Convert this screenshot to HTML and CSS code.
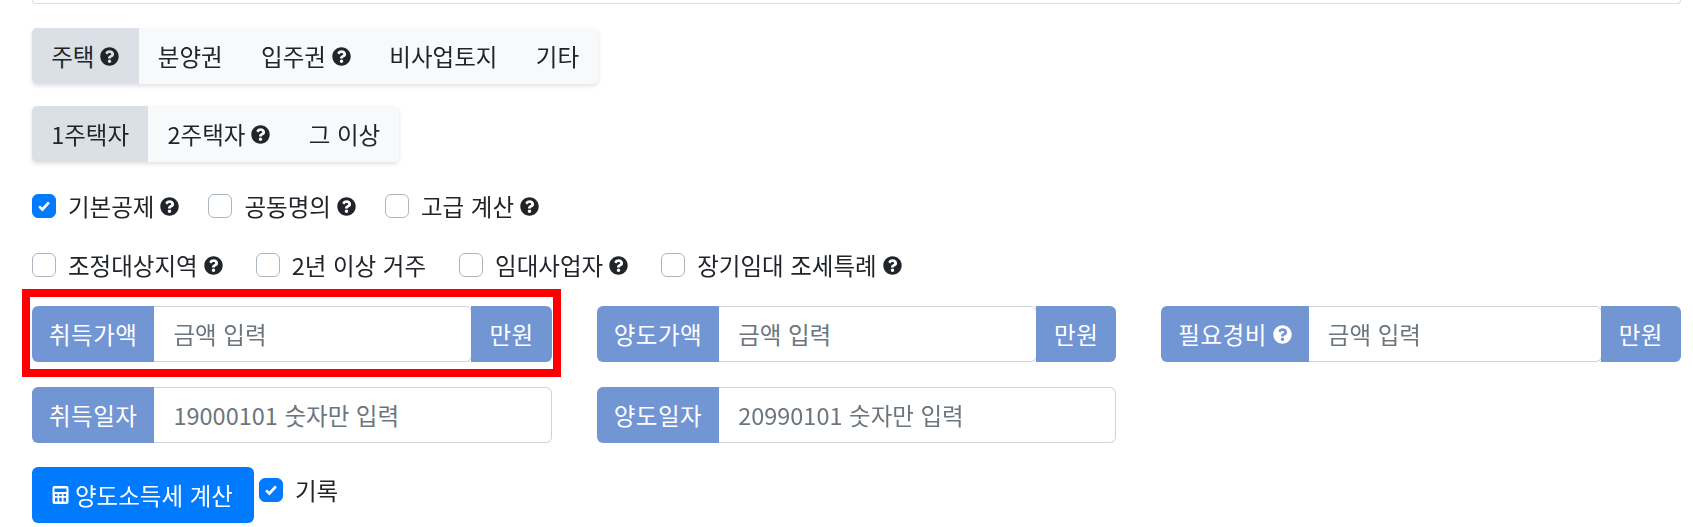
FILE: index.html
```html
<!DOCTYPE html>
<html lang="ko">
<head>
  <meta charset="UTF-8" />
  <title>양도소득세 계산</title>
  <link rel="stylesheet" href="styles.css">
</head>
<body>
  <svg class="defs" width="0" height="0">
    <symbol id="q" viewBox="0 0 512 512">
      <path d="M504 256c0 136.997-111.043 248-248 248S8 392.997 8 256C8 119.083 119.043 8 256 8s248 111.083 248 248zM262.655 90c-54.497 0-89.255 22.957-116.549 63.758-3.536 5.286-2.353 12.415 2.715 16.258l34.699 26.31c5.205 3.947 12.621 3.008 16.665-2.122 17.864-22.658 30.113-35.797 57.303-35.797 20.429 0 45.698 13.148 45.698 32.958 0 14.976-12.363 22.667-32.534 33.976C247.128 238.528 216 254.941 216 296v4c0 6.627 5.373 12 12 12h56c6.627 0 12-5.373 12-12v-1.333c0-28.462 83.186-29.647 83.186-106.667 0-58.002-60.165-102-116.531-102zM256 338c-25.365 0-46 20.635-46 46 0 25.364 20.635 46 46 46s46-20.636 46-46c0-25.365-20.635-46-46-46z"/>
    </symbol>
    <symbol id="tick" viewBox="0 0 8 8">
      <path d="M1.2 4.2 3.1 6 6.8 1.9" fill="none" stroke="#fff" stroke-width="1.5"/>
    </symbol>
  </svg>

  <div class="top-box"></div>

  <div class="tabs tabs-first">
    <a class="tab active">주택 <svg class="qm"><use href="#q"/></svg></a>
    <a class="tab">분양권</a>
    <a class="tab">입주권 <svg class="qm"><use href="#q"/></svg></a>
    <a class="tab">비사업토지</a>
    <a class="tab">기타</a>
  </div>

  <div class="tabs tabs-second">
    <a class="tab active">1주택자</a>
    <a class="tab">2주택자 <svg class="qm"><use href="#q"/></svg></a>
    <a class="tab">그 이상</a>
  </div>

  <div class="checks checks-first">
    <label class="check"><span class="box on"><svg><use href="#tick"/></svg></span>기본공제 <svg class="qm"><use href="#q"/></svg></label>
    <label class="check"><span class="box"></span>공동명의 <svg class="qm"><use href="#q"/></svg></label>
    <label class="check"><span class="box"></span>고급 계산 <svg class="qm"><use href="#q"/></svg></label>
  </div>

  <div class="checks checks-second">
    <label class="check"><span class="box"></span>조정대상지역 <svg class="qm"><use href="#q"/></svg></label>
    <label class="check"><span class="box"></span>2년 이상 거주</label>
    <label class="check"><span class="box"></span>임대사업자 <svg class="qm"><use href="#q"/></svg></label>
    <label class="check"><span class="box"></span>장기임대 조세특례 <svg class="qm"><use href="#q"/></svg></label>
  </div>

  <div class="fields">
    <div class="group marked">
      <span class="addon">취득가액</span>
      <input class="field" placeholder="금액 입력">
      <span class="addon unit">만원</span>
    </div>
    <div class="group">
      <span class="addon">양도가액</span>
      <input class="field" placeholder="금액 입력">
      <span class="addon unit">만원</span>
    </div>
    <div class="group">
      <span class="addon">필요경비 <svg class="qm"><use href="#q"/></svg></span>
      <input class="field" placeholder="금액 입력">
      <span class="addon unit">만원</span>
    </div>
    <div class="group">
      <span class="addon">취득일자</span>
      <input class="field" placeholder="19000101 숫자만 입력">
    </div>
    <div class="group">
      <span class="addon">양도일자</span>
      <input class="field" placeholder="20990101 숫자만 입력">
    </div>
  </div>

  <div class="actions">
    <button class="calc">
      <svg class="calc-icon" viewBox="0 0 16 18">
        <path fill="#fff" fill-rule="evenodd" d="M2 0h12a2 2 0 0 1 2 2v14a2 2 0 0 1-2 2H2a2 2 0 0 1-2-2V2a2 2 0 0 1 2-2zm0 2.500v3.500h12V2.500zM2.500 8v2h2.500V8zm4.200 0v2h2.600V8zm4.300 0v2h2.500V8zM2.500 11.800v3.700h2.500v-3.700zm4.200 0v3.700h2.600v-3.700zm4.300 0v3.700h2.500v-3.700z"/>
      </svg>양도소득세 계산
    </button>
    <label class="check record"><span class="box on"><svg><use href="#tick"/></svg></span>기록</label>
  </div>
</body>
</html>
```

FILE: styles.css
```css
* { box-sizing: border-box; }

body {
  margin: 0;
  padding: 0 12px 0 32px;
  background: #fff;
  color: #212529;
  font-family: "Noto Sans CJK KR", "Noto Sans", sans-serif;
  font-size: 23.5px;
  line-height: 1.4;
  overflow: hidden;
  filter: blur(0.4px);
}

.defs { position: absolute; }

.top-box {
  height: 4px;
  border: 1px solid #dcdfe3;
  border-top: none;
  border-radius: 0 0 6px 6px;
}

.qm {
  width: 19px;
  height: 19px;
  fill: #212529;
  vertical-align: -3px;
}

/* tabs */
.tabs {
  display: flex;
  width: fit-content;
  height: 56px;
  background: #f8f9fa;
  border-radius: 5px;
  box-shadow: 0 2px 4px rgba(0, 0, 0, 0.12);
}
.tabs-first { margin-top: 24px; }
.tabs-second { margin-top: 22px; }

.tab {
  display: flex;
  align-items: center;
  gap: 6px;
  padding: 0 19.2px;
  white-space: nowrap;
}
.tab.active {
  background: #dae0e5;
  border-radius: 5px 0 0 5px;
}

/* checkboxes */
.checks {
  display: flex;
  height: 30px;
  align-items: center;
}
.checks-first { margin-top: 29px; gap: 29px; }
.checks-second { margin-top: 29px; gap: 33px; }

.check {
  display: flex;
  align-items: center;
  gap: 6px;
  white-space: nowrap;
}
.box {
  width: 24px;
  height: 24px;
  margin-right: 6px;
  border: 1.5px solid #adb5bd;
  border-radius: 6px;
  background: #fff;
}
.box.on {
  border-color: #007bff;
  background: #007bff;
  display: flex;
  align-items: center;
  justify-content: center;
}
.box svg { width: 14px; height: 14px; }

/* input groups */
.fields {
  display: grid;
  grid-template-columns: repeat(3, minmax(0, 1fr));
  column-gap: 45px;
  row-gap: 25px;
  margin-top: 26px;
}

.group {
  display: flex;
  height: 56px;
}
.group.marked { position: relative; }
.group.marked::after {
  content: "";
  position: absolute;
  inset: -17px -9px -15px -10px;
  border: 8px solid #ff0000;
}

.addon {
  display: flex;
  align-items: center;
  gap: 6px;
  padding: 0 17px;
  background: #7295d3;
  color: #fff;
  border-radius: 6px 0 0 6px;
  white-space: nowrap;
  letter-spacing: 0.5px;
}
.addon .qm { fill: #fff; }
.addon.unit {
  padding: 0 18px;
  border-radius: 0 6px 6px 0;
}

.field {
  flex: 1;
  min-width: 0;
  padding: 0 19px;
  border: 1.5px solid #ced4da;
  border-left: none;
  border-radius: 0 6px 6px 0;
  font: inherit;
  color: #495057;
}
.field::placeholder { color: #6c757d; opacity: 1; }
.addon.unit { margin-left: -1px; }

/* bottom row */
.actions {
  display: flex;
  align-items: flex-start;
  gap: 5px;
  margin-top: 24px;
}
.calc {
  display: flex;
  align-items: center;
  gap: 6px;
  height: 56px;
  padding: 0 21px 0 20px;
  border: none;
  border-radius: 6px;
  background: #007bff;
  color: #fff;
  font: inherit;
}
.calc-icon { width: 17px; height: 18px; }
.record { margin-top: 7px; }
```
